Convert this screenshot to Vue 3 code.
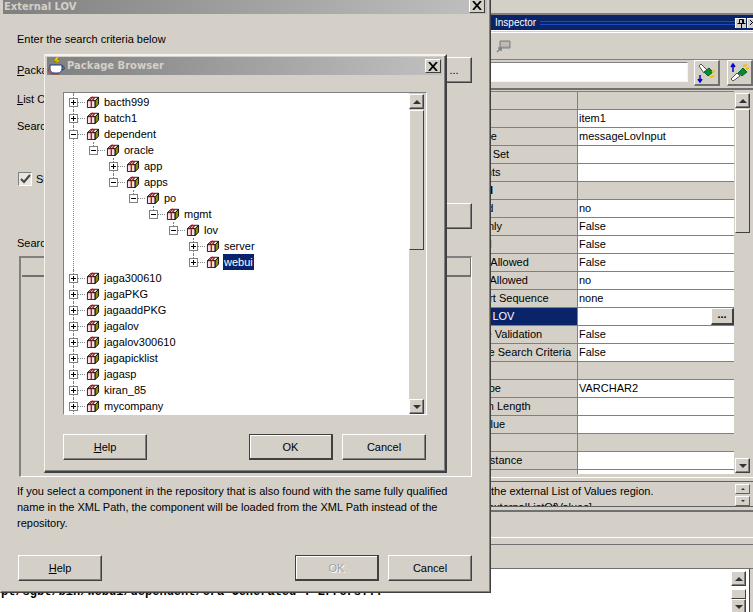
<script setup>
const tree = [
  { label: 'bacth999', depth: 0, mark: 'plus' },
  { label: 'batch1', depth: 0, mark: 'plus' },
  { label: 'dependent', depth: 0, mark: 'minus' },
  { label: 'oracle', depth: 1, mark: 'minus', last: true },
  { label: 'app', depth: 2, mark: 'plus' },
  { label: 'apps', depth: 2, mark: 'minus', last: true },
  { label: 'po', depth: 3, mark: 'minus', last: true },
  { label: 'mgmt', depth: 4, mark: 'minus', last: true },
  { label: 'lov', depth: 5, mark: 'minus', last: true },
  { label: 'server', depth: 6, mark: 'plus' },
  { label: 'webui', depth: 6, mark: 'plus', last: true, selected: true },
  { label: 'jaga300610', depth: 0, mark: 'plus' },
  { label: 'jagaPKG', depth: 0, mark: 'plus' },
  { label: 'jagaaddPKG', depth: 0, mark: 'plus' },
  { label: 'jagalov', depth: 0, mark: 'plus' },
  { label: 'jagalov300610', depth: 0, mark: 'plus' },
  { label: 'jagapicklist', depth: 0, mark: 'plus' },
  { label: 'jagasp', depth: 0, mark: 'plus' },
  { label: 'kiran_85', depth: 0, mark: 'plus' },
  { label: 'mycompany', depth: 0, mark: 'plus' }
]

const props = [
  { label: '', section: true },
  { label: 'ID', value: 'item1' },
  { label: 'Item Style', value: 'messageLovInput', pad: 4 },
  { label: 'Property Set', value: '', pad: 4 },
  { label: 'Segments', value: '', pad: 7 },
  { label: 'Control', section: true, bold: true, pad: 10 },
  { label: 'Enabled', value: 'no', pad: 9 },
  { label: 'Read Only', value: 'False', pad: 6 },
  { label: 'Internal', value: 'False', pad: 11 },
  { label: 'Search Allowed', value: 'False', pad: 9 },
  { label: 'Query Allowed', value: 'no', pad: 13 },
  { label: 'Init Sort Sequence', value: 'none', pad: 14 },
  { label: 'External LOV', value: '', active: true, pad: 5 },
  { label: 'Disable Validation', value: 'False', pad: 11 },
  { label: 'Selective Search Criteria', value: 'False', pad: 6 },
  { label: '', section: true },
  { label: 'Data Type', value: 'VARCHAR2', pad: 7 },
  { label: 'Domain Length', value: '', pad: 12 },
  { label: 'Field Value', value: '', pad: 7 },
  { label: '', section: true },
  { label: 'View Instance', value: '', pad: 10 },
  { label: '', value: '' }
]
</script>

<template>
  <div class="desk">
    <!-- console behind everything -->
    <div class="console">
      <p class="console-text">pt/sgbt/bin/webui/dependent/ora   Generated : Errors...</p>
    </div>

    <!-- property inspector -->
    <section class="inspector">
      <div class="insp-top"></div>
      <header class="insp-title">
        <span class="insp-name">Inspector</span>
        <i class="grip"></i>
        <b class="mini-btn">
          <svg width="9" height="9" viewBox="0 0 9 9"><path d="M2.500.5h4v4h-4zM5.500.5v4M.5 4.500h8M4.500 4.500V9" fill="none" stroke="#000"/></svg>
        </b>
        <b class="mini-btn close-mini">
          <svg width="6" height="8" viewBox="0 0 6 8"><path d="M0 1l5 5M5 1L0 6" fill="none" stroke="#000"/></svg>
        </b>
      </header>
      <div class="insp-tools">
        <svg class="tool-icon" width="15" height="13" viewBox="0 0 15 13">
          <path d="M4 1h10v7H4z" fill="#a8a8a8" stroke="#808080"/>
          <path d="M5 3h8M5 5h8" stroke="#d4d0c8"/>
          <path d="M1 12l4-4M2 8h3v3" fill="none" stroke="#808080" stroke-width="1.5"/>
        </svg>
      </div>
      <div class="insp-search">
        <div class="search-input"></div>
        <button class="tool-btn">
          <svg width="20" height="20" viewBox="0 0 20 20">
            <path d="M2 3l2-2 6 6-3 3z" fill="#fff" stroke="#555"/>
            <path d="M7 9l5-4 4 4-5 4z" fill="#0a8a2a" stroke="#063"/>
            <path d="M13 14l4-1M15 9l3-1" stroke="#f0c000" stroke-width="2"/>
            <path d="M3 12v6M1 16l2 3 2-3" fill="none" stroke="#00c" stroke-width="1.5"/>
          </svg>
        </button>
        <button class="tool-btn second">
          <svg width="20" height="20" viewBox="0 0 20 20">
            <path d="M3 18l-2-2 6-6 3 3z" fill="#fff" stroke="#555"/>
            <path d="M8 10l5-5 4 4-5 4z" fill="#0a8a2a" stroke="#063"/>
            <path d="M13 3l4-1M16 6l3-1" stroke="#f0c000" stroke-width="2"/>
            <path d="M3 9V2M1 4l2-3 2 3" fill="none" stroke="#00c" stroke-width="1.5"/>
          </svg>
        </button>
      </div>
      <div class="insp-body">
        <div class="prop-table">
          <div v-for="(row, i) in props" :key="i" class="prop-row" :class="{ 'is-section': row.section, 'is-active': row.active }">
            <div class="prop-label" :class="{ bold: row.bold }" :style="{ paddingLeft: (row.pad || 9) + 'px' }">{{ row.label }}</div>
            <div class="prop-value">
              {{ row.value }}
              <button v-if="row.active" class="lov-btn">...</button>
            </div>
          </div>
        </div>
        <div class="scrollbar insp-scroll">
          <button class="sb-btn"><i class="up"></i></button>
          <div class="sb-thumb insp-thumb"></div>
          <div class="sb-track"></div>
          <button class="sb-btn"><i class="down"></i></button>
        </div>
      </div>
      <div class="insp-help">
        <div class="help-text">
          <p>Sets the external List of Values region.</p>
          <p>attr: externalListOfValues]</p>
        </div>
        <div class="help-spin">
          <button class="spin"><i class="up tiny"></i></button>
          <button class="spin"><i class="down tiny"></i></button>
        </div>
      </div>
      <div class="insp-band first"></div>
      <div class="insp-band second"></div>
      <div class="insp-editor">
        <div class="scrollbar editor-scroll">
          <button class="sb-btn"><i class="up"></i></button>
          <div class="sb-thumb"></div>
          <button class="sb-btn"><i class="down"></i></button>
        </div>
      </div>
    </section>

    <!-- External LOV dialog -->
    <section class="window lov">
      <header class="titlebar lov-title">
        <span>External LOV</span>
        <button class="x-btn">
          <svg width="10" height="9" viewBox="0 0 10 9"><path d="M1 0l8 9M9 0L1 9" stroke="#000" stroke-width="1.8"/></svg>
        </button>
      </header>
      <div class="lov-body">
        <p class="intro">Enter the search criteria below</p>
        <div class="pack-row">
          <label><u>P</u>ackage</label>
          <button class="btn dots">...</button>
        </div>
        <p class="list-label"><u>L</u>ist Of Values</p>
        <p class="search-label">Search Region</p>
        <label class="check-row">
          <span class="check">
            <svg width="11" height="10" viewBox="0 0 11 10"><path d="M1 5l3 3 6-7" fill="none" stroke="#444" stroke-width="2"/></svg>
          </span>
          Show
        </label>
        <div class="wide-row"><button class="btn wide"></button></div>
        <p class="results-label">Search Results</p>
        <div class="results">
          <div class="results-head"></div>
        </div>
        <p class="note">If you select a component in the repository that is also found with the same fully qualified name in the XML Path, the component will be loaded from the XML Path instead of the repository.</p>
        <div class="actions">
          <button class="btn"><u>H</u>elp</button>
          <span class="spacer"></span>
          <button class="btn default disabled">OK</button>
          <button class="btn">Cancel</button>
        </div>
      </div>
    </section>

    <!-- Package Browser dialog -->
    <section class="window browser">
      <header class="titlebar browser-title">
        <svg class="cup" width="18" height="18" viewBox="0 0 18 18">
          <path d="M8 0L6 4h3L7 8l5-5H9l2-3z" fill="#f5d800" stroke="#8a7000" stroke-width=".5"/>
          <path d="M2 8h12v4c0 2-2 4-4 4H6c-2 0-4-2-4-4z" fill="#fff" stroke="#1a3a8a"/>
          <path d="M14 9c3 0 3 4 0 4" fill="none" stroke="#1a3a8a"/>
          <path d="M0 11c0 3 2 6 5 6h6" fill="none" stroke="#b03030"/>
        </svg>
        <span>Package Browser</span>
        <button class="x-btn">
          <svg width="10" height="9" viewBox="0 0 10 9"><path d="M1 0l8 9M9 0L1 9" stroke="#000" stroke-width="1.8"/></svg>
        </button>
      </header>
      <div class="browser-body">
        <div class="tree-frame">
          <ul class="tree">
            <li v-for="row in tree" :key="row.label" class="node">
              <span v-if="row.depth" class="rail"></span>
              <span class="indent" :style="{ width: (row.depth > 0 ? row.depth * 20 - 20 : 0) + 'px' }"></span>
              <span class="toggle" :class="{ last: row.last }">
                <span class="box" :class="row.mark"></span>
              </span>
              <svg class="pkg" width="14" height="12" viewBox="0 0 16 14">
                <path d="M1.500 5.500l4-4h9l-4 4z" fill="#fff" stroke="#000"/>
                <path d="M1.500 5.500h9v8h-9z" fill="#f4e4e4" stroke="#000"/>
                <path d="M10.500 5.500l4-4v8l-4 4z" fill="#8c8a10" stroke="#000"/>
                <path d="M6 6v7M4 5l4-4M10 1.500l-3 4" stroke="#c00000" fill="none" stroke-width="1.500"/>
              </svg>
              <span class="node-label" :class="{ selected: row.selected }">{{ row.label }}</span>
            </li>
          </ul>
          <div class="scrollbar tree-scroll">
            <button class="sb-btn"><i class="up"></i></button>
            <div class="sb-thumb tree-thumb"></div>
            <div class="sb-track"></div>
            <button class="sb-btn"><i class="down"></i></button>
          </div>
        </div>
        <div class="actions browser-actions">
          <button class="btn"><u>H</u>elp</button>
          <span class="spacer"></span>
          <button class="btn default">OK</button>
          <button class="btn">Cancel</button>
        </div>
      </div>
    </section>
  </div>
</template>

<style>
html, body { margin: 0; background: #fff; }
</style>

<style scoped>
* { box-sizing: border-box; }
p { margin: 0; }

.desk {
  position: relative;
  width: 753px;
  height: 612px;
  overflow: hidden;
  background: #fff;
  font: 11px/16px "Liberation Sans", Arial, sans-serif;
  color: #000;
}

/* console */
.console {
  position: absolute;
  left: 0;
  top: 570px;
  width: 731px;
  height: 42px;
  background: #fff;
}
.console-text {
  position: absolute;
  left: 1px;
  top: 15px;
  font: bold 12px/14px "Liberation Mono", monospace;
  white-space: pre;
}

/* inspector */
.inspector {
  position: absolute;
  left: 444px;
  top: 0;
  width: 309px;
  height: 612px;
  background: #d4d0c8;
  display: flex;
  flex-direction: column;
}
.insp-top { height: 15px; flex: none; border-bottom: 2px solid #808080; }
.insp-title {
  height: 15px;
  flex: none;
  background: #0a246a;
  color: #fff;
  display: flex;
  align-items: center;
  padding-left: 51px;
  box-shadow: 0 1px 0 #fff;
}
.insp-name { width: 45px; flex: none; font-size: 10px; }
.grip {
  width: 195px;
  height: 4px;
  flex: none;
  border-top: 1px solid #1c4ac0;
  border-bottom: 1px solid #1c4ac0;
}
.mini-btn {
  width: 11px;
  height: 10px;
  flex: none;
  background: #d4d0c8;
  border-top: 1px solid #fff;
  border-left: 1px solid #fff;
  display: flex;
  align-items: center;
  justify-content: center;
}
.close-mini { margin-left: 1px; }
.insp-tools {
  height: 28px;
  flex: none;
  margin-top: 2px;
  border-top: 1px solid #fff;
  border-bottom: 1px solid #808080;
  padding: 7px 0 0 52px;
}
.tool-icon { display: block; }
.insp-search {
  height: 30px;
  flex: none;
  display: flex;
  align-items: flex-start;
  border-bottom: 2px solid #707070;
}
.search-input {
  width: 244px;
  height: 20px;
  margin-top: 2px;
  background: #fff;
  border: 1px solid #808080;
  border-right-color: #f4f4f0;
  border-bottom-color: #f4f4f0;
  box-shadow: inset 0 0 0 1px #fff;
}
.tool-btn {
  width: 26px;
  height: 26px;
  margin-left: 6px;
  padding: 0;
  background: #d4d0c8;
  border: 1px solid;
  border-color: #fff #707070 #707070 #fff;
  border-width: 1px 2px 2px 1px;
  display: flex;
  align-items: center;
  justify-content: center;
}
.tool-btn.second { margin-left: 7px; }
.insp-body {
  height: 387px;
  flex: none;
  display: flex;
  align-items: flex-start;
  overflow: hidden;
  padding-top: 1px;
}
.prop-table { width: 290px; height: 383px; overflow: hidden; flex: none; border-top: 1px solid #808080; }
.prop-row {
  display: grid;
  grid-template-columns: 133px 157px;
  height: 18px;
  border-bottom: 1px solid #808080;
}
.prop-label { white-space: nowrap; overflow: hidden; line-height: 17px; }
.prop-label.bold { font-weight: bold; }
.prop-value {
  position: relative;
  background: #fff;
  border-left: 1px solid #808080;
  padding-left: 1px;
  line-height: 17px;
}
.is-section .prop-value { background: #d4d0c8; }
.is-active .prop-label { background: #0a246a; color: #fff; }
.lov-btn {
  position: absolute;
  right: 0;
  top: 0;
  width: 23px;
  height: 17px;
  padding: 0 0 4px;
  font: bold 11px/10px "Liberation Sans", sans-serif;
  background: #d4d0c8;
  border: 1px solid;
  border-color: #fff #404040 #404040 #fff;
  border-width: 1px 2px 2px 1px;
}

.scrollbar { display: flex; flex-direction: column; background: #d4d0c8; flex: none; width: 16px; }
.sb-btn {
  width: 15px;
  height: 15px;
  flex: none;
  padding: 0;
  background: #d4d0c8;
  border: 1px solid;
  border-color: #fff #404040 #404040 #fff;
  box-shadow: inset -1px -1px 0 #808080;
  display: flex;
  align-items: center;
  justify-content: center;
}
.up, .down { display: block; width: 0; height: 0; border-left: 4px solid transparent; border-right: 4px solid transparent; }
.up { border-bottom: 4px solid #333; }
.down { border-top: 4px solid #333; }
.tiny { border-left-width: 2px; border-right-width: 2px; }
.tiny.up { border-bottom-width: 2px; }
.tiny.down { border-top-width: 2px; }
.sb-thumb {
  flex: none;
  width: 15px;
  height: 8px;
  margin-top: 1px;
  background: #d4d0c8;
  border: 1px solid;
  border-color: #fff #404040 #404040 #fff;
}
.sb-track { flex: 1; }
.insp-scroll { height: 380px; margin: 2px 0 0 1px; }
.insp-thumb { height: 124px; }

.insp-help {
  height: 33px;
  flex: none;
  border-top: 1px solid #fff;
  display: flex;
  padding-top: 3px;
}
.help-text {
  width: 290px;
  height: 26px;
  overflow: hidden;
  border-top: 1px solid #606060;
  border-bottom: 1px solid #606060;
  padding: 1px 0 0 22px;
  white-space: nowrap;
}
.help-spin { flex: 1; border-top: 1px solid #606060; border-bottom: 1px solid #606060; padding: 2px 0 0 1px; height: 26px; }
.spin {
  display: flex;
  align-items: center;
  justify-content: center;
  width: 15px;
  height: 10px;
  padding: 0;
  margin-bottom: 2px;
  background: #d4d0c8;
  border: 1px solid;
  border-color: #fff #606060 #606060 #fff;
}
.insp-band { flex: none; }
.insp-band.first { height: 28px; border-top: 2px solid #707070; border-bottom: 1px solid #fff; }
.insp-band.second { height: 31px; border-bottom: 1px solid #707070; box-shadow: inset 0 6px 0 #d4d0c8, inset 0 7px 0 #707070; }
.insp-editor {
  flex: 1;
  background: #fff;
  width: 306px;
  display: flex;
  justify-content: flex-end;
  border-right: 1px solid #404040;
  padding: 2px 3px 0 0;
}
.editor-scroll { background: #fff; width: 15px; }
.editor-scroll .sb-thumb { height: 10px; margin-top: 3px; }

/* windows */
.window {
  position: absolute;
  background: #d4d0c8;
  border: 1px solid;
  border-color: #f4f2ee #404040 #404040 #f4f2ee;
  box-shadow: inset -1px -1px 0 #808080;
}
.titlebar {
  display: flex;
  align-items: center;
  background: linear-gradient(90deg, #808080, #c0c0c0);
  color: #d4d0c8;
  font: bold 10px/14px "DejaVu Sans", sans-serif;
}
.x-btn {
  width: 16px;
  height: 14px;
  flex: none;
  padding: 0;
  margin-left: auto;
  background: #d4d0c8;
  border: 1px solid;
  border-color: #fff #404040 #404040 #fff;
  display: flex;
  align-items: center;
  justify-content: center;
}

/* LOV */
.lov {
  left: 0;
  top: -5px;
  width: 491px;
  height: 598px;
  border-left-color: #d4d0c8;
  border-top: 0;
}
.lov-title { height: 19px; margin: 0 3px 0 2px; padding: 5px 2px 0 1px; }
.lov-title .x-btn { margin-top: -3px; }
.lov-body { padding: 0 18px 0 16px; }
.intro { margin-top: 17px; height: 16px; }
.pack-row { margin-top: 10px; height: 26px; display: flex; align-items: center; justify-content: space-between; }
.btn {
  width: 84px;
  height: 26px;
  flex: none;
  padding: 0;
  font: 11px/16px "Liberation Sans", sans-serif;
  color: #000;
  background: #d4d0c8;
  border: 1px solid;
  border-color: #fff #404040 #404040 #fff;
  box-shadow: inset -1px -1px 0 #808080;
}
.btn.default { border-color: #404040; border-width: 1px 2px 2px 1px; box-shadow: inset 1px 1px 0 #fff; }
.btn.disabled { color: #a0a0a0; text-shadow: 1px 1px 0 #fff; }
.btn.dots { width: 36px; }
.btn.wide { width: 200px; }
.list-label { margin-top: 8px; height: 16px; }
.search-label { margin-top: 11px; height: 16px; }
.check-row { margin-top: 38px; display: flex; align-items: center; gap: 4px; height: 14px; margin-left: 1px; }
.check {
  width: 14px;
  height: 14px;
  background: #e8e6e0;
  border: 1px solid #808080;
  border-right-color: #fff;
  border-bottom-color: #fff;
  display: flex;
  align-items: center;
  justify-content: center;
}
.wide-row { margin-top: 17px; display: flex; justify-content: flex-end; }
.results-label { margin-top: 6px; height: 16px; }
.results {
  margin: 5px 0 0 2px;
  height: 221px;
  border: 1px solid;
  border-width: 2px 1px 1px 2px;
  border-color: #808080 #fff #fff #808080;
}
.results-head {
  height: 19px;
  border-bottom: 2px solid #707070;
  margin-left: 1px;
  border-right: 1px solid #707070;
}
.note { margin-top: 6px; height: 48px; width: 440px; }
.actions { display: flex; gap: 9px; margin-top: 24px; margin-left: 1px; }
.spacer { flex: 1; }

/* browser */
.browser { left: 44px; top: 54px; width: 403px; height: 419px; z-index: 2; border-width: 2px 2px 2px 1px; padding: 1px 3px 0 2px; }
.browser-title { height: 18px; padding-left: 1px; padding-right: 1px; }
.cup { margin-right: 1px; flex: none; }
.browser-body { padding: 17px 17px 0 16px; }
.tree-frame {
  position: relative;
  width: 364px;
  height: 323px;
  background: #fff;
  border-top: 1px solid #808080;
  border-left: 1px solid #808080;
  border-right: 1px solid #fff;
  border-bottom: 1px solid #fff;
  display: flex;
  overflow: hidden;
}
.tree { margin: 0; padding: 1px 0 0; list-style: none; flex: 1; position: relative; }
.tree::before { content: ""; position: absolute; left: 9px; top: 0; bottom: 0; border-left: 1px dotted #808080; }
.node { height: 16px; display: flex; align-items: center; position: relative; white-space: nowrap; }
.rail { width: 20px; flex: none; }
.indent { flex: none; }
.toggle { width: 21px; height: 16px; flex: none; position: relative; }
.toggle::before { content: ""; position: absolute; left: 9px; top: 0; bottom: 0; border-left: 1px dotted #808080; }
.toggle.last::before { bottom: 8px; }
.toggle::after { content: ""; position: absolute; left: 10px; right: 0; top: 8px; border-top: 1px dotted #808080; }
.box {
  position: absolute;
  z-index: 1;
  left: 5px;
  top: 4px;
  width: 9px;
  height: 9px;
  border: 1px solid #808080;
  background: linear-gradient(#000, #000) center / 5px 1px no-repeat, #fff;
}
.box.plus {
  background: linear-gradient(#000, #000) center / 5px 1px no-repeat, linear-gradient(#000, #000) center / 1px 5px no-repeat, #fff;
}
.pkg { flex: none; margin-left: 1px; }
.node-label { margin-left: 3px; padding: 0 1px; line-height: 16px; }
.node-label.selected { background: #0a246a; color: #fff; }
.tree-scroll { height: 321px; width: 17px; padding-top: 1px; }
.tree-thumb { height: 140px; }
.browser-actions { margin-top: 19px; margin-left: 0; width: 363px; }
</style>
